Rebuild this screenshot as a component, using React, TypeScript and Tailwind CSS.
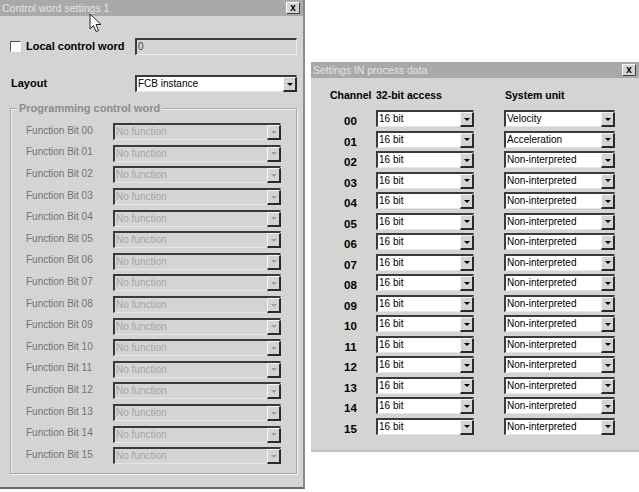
import React from 'react';

const FONT = { fontFamily: '"Liberation Sans", Arial, sans-serif' };

function Arrow({ disabled }: { disabled?: boolean }) {
  return (
    <div className="w-0 h-0 border-x-[3px] border-x-transparent border-t-[3px]"
      style={{ borderTopColor: disabled ? '#a0a0a0' : '#000' }} />
  );
}

function Combo({ text, disabled, className }: { text: string; disabled?: boolean; className?: string }) {
  return (
    <div className={`flex h-[17px] border-t-[2px] border-l-[2px] border-t-[#3a3a3a] border-l-[#3a3a3a] border-r border-b border-r-[#e6e6e6] border-b-[#e6e6e6] ${disabled ? 'bg-[#d4d4d4]' : 'bg-white'} ${className ?? ''}`}>
      <span className={`flex-1 pl-[1px] text-[10px] leading-[14px] whitespace-nowrap overflow-hidden ${disabled ? 'text-[#a6a6a6]' : 'text-black'}`}>{text}</span>
      <div className="w-[14px] h-[15px] -mb-[1px] -mr-[1px] flex items-center justify-center bg-[#d4d4d4] border-t border-l border-t-[#f4f4f4] border-l-[#f4f4f4] border-r-[2px] border-b-[2px] border-r-[#2a2a2a] border-b-[#2a2a2a]">
        <Arrow disabled={disabled} />
      </div>
    </div>
  );
}

function CloseBtn() {
  return (
    <div className="w-[14px] h-[12px] bg-[#d4d4d4] border-t border-l border-t-white border-l-white border-r border-b border-r-[#404040] border-b-[#404040] flex items-center justify-center text-[10px] font-bold leading-none text-black">
      x
    </div>
  );
}

function TitleBar({ title }: { title: string }) {
  return (
    <div className="h-[16px] bg-[#a9a9a9] flex items-center justify-between pl-[2px] pr-[3px]">
      <span className="text-[10.5px] text-[#e4e4e4] leading-none">{title}</span>
      <CloseBtn />
    </div>
  );
}

const bits = Array.from({ length: 16 }, (_, i) => String(i).padStart(2, '0'));
const units = ['Velocity', 'Acceleration', ...Array(14).fill('Non-interpreted')];

export default function App() {
  return (
    <div className="relative w-[639px] h-[492px] bg-white overflow-hidden" style={FONT}>
      {/* Control word settings window */}
      <div className="absolute left-0 top-0 w-[305px] h-[489px] bg-[#d4d4d4] border-r-[2px] border-b-[2px] border-r-[#8a8a8a] border-b-[#6a6a6a] flex flex-col">
        <TitleBar title="Control word settings 1" />
        <div className="flex items-center h-[17px] mt-[22px] pl-[10px] pr-[6px]">
          <div className="w-[11px] h-[11px] bg-white border-t border-l border-t-[#505050] border-l-[#505050] border-r border-b border-r-[#f4f4f4] border-b-[#f4f4f4]" />
          <span className="ml-[5px] text-[11px] font-bold text-black w-[109px]">Local control word</span>
          <div className="flex-1 h-[17px] border-t-[2px] border-l-[2px] border-t-[#3a3a3a] border-l-[#3a3a3a] border-r border-b border-r-[#ececec] border-b-[#ececec] text-[10px] leading-[14px] pl-[1px] text-[#404040]">0</div>
        </div>
        <div className="flex items-center h-[17px] mt-[20px] pl-[11px] pr-[6px]">
          <span className="text-[11px] font-bold text-black w-[124px]">Layout</span>
          <Combo text="FCB instance" className="flex-1" />
        </div>
        <div className="relative mt-[16px] ml-[10px] mr-[6px] h-[366px] border border-[#a8a8a8] shadow-[inset_1px_1px_0_#f2f2f2,1px_1px_0_#f2f2f2]">
          <span className="absolute left-[6px] -top-[7px] px-[2px] bg-[#d4d4d4] text-[11px] font-bold text-[#8c8c8c] leading-[13px]">Programming control word</span>
          <div className="flex flex-col pt-[12px] pl-[15px] pr-[15px]">
            {bits.map((b) => (
              <div key={b} className="flex items-center h-[21.6px]">
                <span className="w-[87px] text-[10px] text-[#737373] -mt-[3px]">Function Bit {b}</span>
                <Combo text="No function" disabled className="flex-1" />
              </div>
            ))}
          </div>
        </div>
        {/* mouse cursor */}
        <svg className="absolute left-[89px] top-[13px]" width="14" height="21" viewBox="0 0 14 21">
          <path d="M1 1 L1 16 L4.5 12.5 L7 18.5 L9.5 17.5 L7 11.5 L12 11.5 Z" fill="#fff" stroke="#222" strokeWidth="1" strokeLinejoin="round" />
        </svg>
      </div>

      {/* Settings IN process data window */}
      <div className="absolute left-[311px] top-[62px] w-[328px] h-[390px] bg-[#d4d4d4] border-b-[2px] border-b-[#c0c0c0] flex flex-col">
        <TitleBar title="Settings IN process data" />
        <div className="flex items-center h-[14px] mt-[11px] text-[10.5px] font-bold text-black">
          <span className="ml-[19px] w-[46px]">Channel</span>
          <span className="w-[129px]">32-bit access</span>
          <span>System unit</span>
        </div>
        <div className="flex flex-col mt-[7px]">
          {bits.map((b, i) => (
            <div key={b} className="flex items-start h-[20.5px]">
              <span className="ml-[19px] w-[41px] mt-[4px] text-center text-[11.5px] font-bold text-black leading-[14px]">{b}</span>
              <Combo text="16 bit" className="ml-[5px] w-[98px]" />
              <Combo text={units[i]} className="ml-[30px] w-[111px]" />
            </div>
          ))}
        </div>
      </div>
    </div>
  );
}
